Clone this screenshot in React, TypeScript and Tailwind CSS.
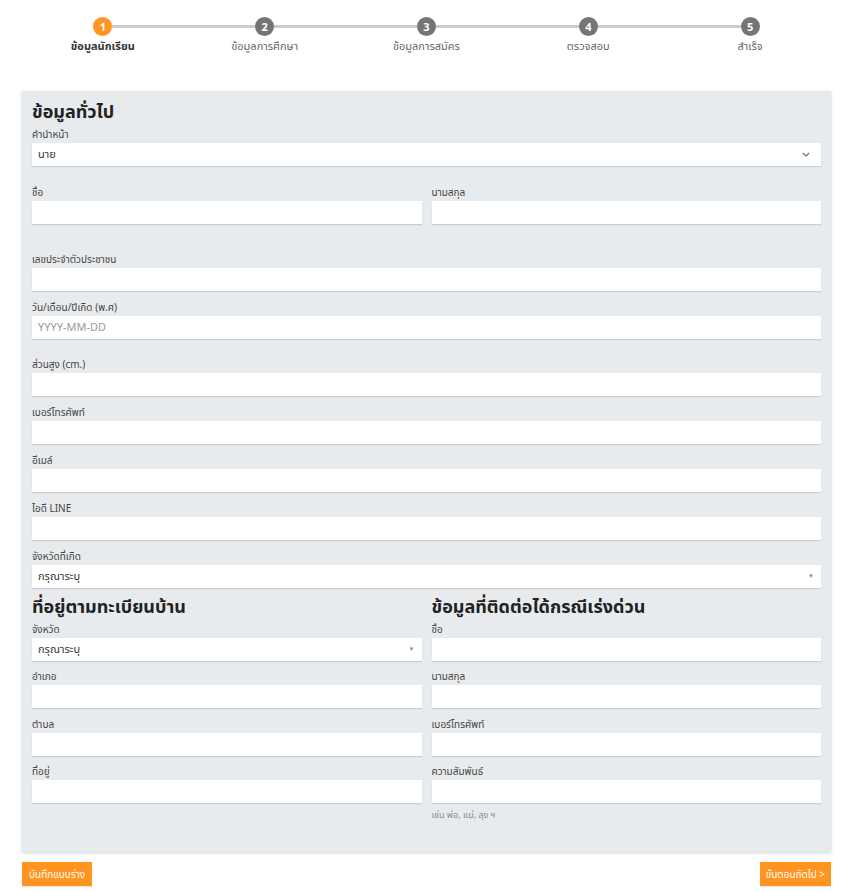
const steps = ["ข้อมูลนักเรียน", "ข้อมูลการศึกษา", "ข้อมูลการสมัคร", "ตรวจสอบ", "สำเร็จ"];

function Stepper() {
  return (
    <div className="flex pt-[17px]">
      {steps.map((label, i) => (
        <div key={label} className="flex w-[162px] flex-col items-center">
          <div className="flex w-full items-center">
            <div className={`h-[3px] flex-1 ${i > 0 ? "bg-[#c9ced5]" : ""}`} />
            <div
              className={`flex size-[19px] items-center justify-center rounded-full text-[11px] font-bold leading-none text-white ${
                i === 0 ? "bg-[#ff9420]" : "bg-[#757575]"
              }`}
            >
              {i + 1}
            </div>
            <div className={`h-[3px] flex-1 ${i < steps.length - 1 ? "bg-[#c9ced5]" : ""}`} />
          </div>
          <div className={`mt-[2px] text-[11px] leading-[16px] ${i === 0 ? "font-bold text-[#333]" : "text-[#666]"}`}>
            {label}
          </div>
        </div>
      ))}
    </div>
  );
}

type FieldProps = {
  label: string;
  kind?: "input" | "select" | "combo";
  value?: string;
  placeholder?: string;
  className?: string;
};

function Field({ label, kind = "input", value, placeholder, className = "mb-[8px]" }: FieldProps) {
  return (
    <div className={className}>
      <div className="h-[17px] text-[10px] leading-[16px] text-[#444]">{label}</div>
      <div className="flex h-[23px] items-center bg-white px-[6px] text-[11px] text-[#333] shadow-[0_1px_1px_rgba(0,0,0,0.12)]">
        <span className={`flex-1 ${placeholder ? "text-[#999]" : ""}`}>{value ?? placeholder}</span>
        {kind === "select" && (
          <svg viewBox="0 0 10 6" className="mr-[5px] h-[5px] w-[8px] fill-none stroke-[#555]" strokeWidth="1.3">
            <path d="M1 1l4 4 4-4" />
          </svg>
        )}
        {kind === "combo" && <span className="mr-[1px] text-[6px] text-[#888]">▼</span>}
      </div>
    </div>
  );
}

export default function App() {
  return (
    <div className="min-h-[892px] bg-white px-[22px] font-['Noto_Sans','Noto_Sans_Thai',sans-serif]">
      <Stepper />

      <section className="mt-[37px] bg-[#e8ebee] px-[10px] pb-[31px] pt-[8px] shadow-[0_1px_3px_rgba(0,0,0,0.18)]">
        <h2 className="mb-[3px] text-[18px] font-bold leading-[24px] text-[#222]">ข้อมูลทั่วไป</h2>
        <Field label="คำนำหน้า" kind="select" value="นาย" className="mb-[18px]" />
        <div className="mb-[27px] grid grid-cols-2 gap-[10px]">
          <Field label="ชื่อ" className="" />
          <Field label="นามสกุล" className="" />
        </div>
        <Field label="เลขประจำตัวประชาชน" />
        <Field label="วัน/เดือน/ปีเกิด (พ.ศ)" placeholder="YYYY-MM-DD" className="mb-[17px]" />
        <Field label="ส่วนสูง (cm.)" />
        <Field label="เบอร์โทรศัพท์" />
        <Field label="อีเมล์" />
        <Field label="ไอดี LINE" />
        <Field label="จังหวัดที่เกิด" kind="combo" value="กรุณาระบุ" className="mb-[6px]" />

        <div className="grid grid-cols-2 gap-[10px]">
          <div>
            <h2 className="mb-[3px] text-[18px] font-bold leading-[24px] text-[#222]">ที่อยู่ตามทะเบียนบ้าน</h2>
            <Field label="จังหวัด" kind="combo" value="กรุณาระบุ" className="mb-[7px]" />
            <Field label="อำเภอ" className="mb-[8px]" />
            <Field label="ตำบล" className="mb-[7px]" />
            <Field label="ที่อยู่" className="" />
          </div>
          <div>
            <h2 className="mb-[3px] text-[18px] font-bold leading-[24px] text-[#222]">ข้อมูลที่ติดต่อได้กรณีเร่งด่วน</h2>
            <Field label="ชื่อ" className="mb-[7px]" />
            <Field label="นามสกุล" className="mb-[8px]" />
            <Field label="เบอร์โทรศัพท์" className="mb-[7px]" />
            <Field label="ความสัมพันธ์" className="" />
            <p className="mt-[6px] text-[9px] leading-[12px] text-[#888]">เช่น พ่อ, แม่, ลุง ฯ</p>
          </div>
        </div>
      </section>

      <div className="mt-[10px] flex justify-between">
        <button className="h-[24px] bg-[#ff9420] px-[7px] text-[10px] text-white shadow-[0_1px_1px_rgba(0,0,0,0.1)]">
          บันทึกแบบร่าง
        </button>
        <button className="h-[24px] bg-[#ff9420] px-[6px] text-[10px] text-white shadow-[0_1px_1px_rgba(0,0,0,0.1)]">
          ขั้นตอนถัดไป &gt;
        </button>
      </div>
    </div>
  );
}
